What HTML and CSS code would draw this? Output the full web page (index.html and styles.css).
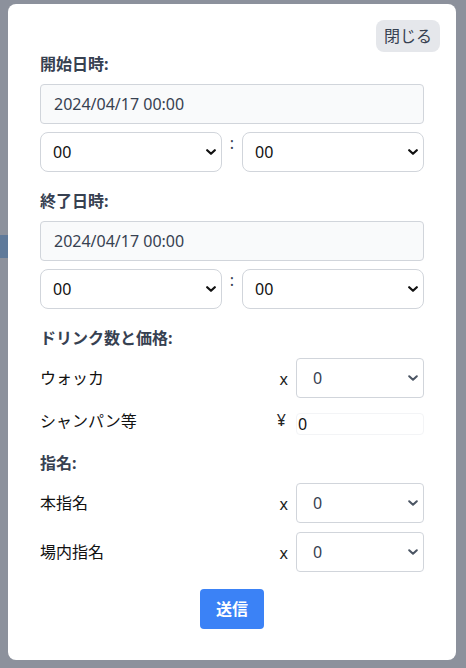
FILE: index.html
```html
<!DOCTYPE html>
<html lang="ja">
<head>
<meta charset="utf-8">
<title>入力</title>
<link rel="stylesheet" href="styles.css">
</head>
<body>
<div class="backdrop">
  <div class="strip"></div>
  <div class="modal">
    <div class="modal-head">
      <button class="close-btn" type="button">閉じる</button>
    </div>

    <div class="label">開始日時:</div>
    <input class="date-input" type="text" value="2024/04/17 00:00" readonly>
    <div class="time-row">
      <select class="time-select"><option>00</option></select>
      <span class="colon">:</span>
      <select class="time-select"><option>00</option></select>
    </div>

    <div class="label">終了日時:</div>
    <input class="date-input" type="text" value="2024/04/17 00:00" readonly>
    <div class="time-row">
      <select class="time-select"><option>00</option></select>
      <span class="colon">:</span>
      <select class="time-select"><option>00</option></select>
    </div>

    <div class="label">ドリンク数と価格:</div>
    <div class="item-row">
      <span class="item-name">ウォッカ</span>
      <span class="unit">x</span>
      <select class="count-select"><option>0</option></select>
    </div>
    <div class="item-row price-row">
      <span class="item-name">シャンパン等</span>
      <span class="unit yen">¥</span>
      <input class="price-input" type="text" value="0">
    </div>

    <div class="label">指名:</div>
    <div class="item-row">
      <span class="item-name">本指名</span>
      <span class="unit">x</span>
      <select class="count-select"><option>0</option></select>
    </div>
    <div class="item-row gap-row">
      <span class="item-name">場内指名</span>
      <span class="unit">x</span>
      <select class="count-select"><option>0</option></select>
    </div>

    <div class="actions">
      <button class="submit-btn" type="button">送信</button>
    </div>
  </div>
</div>
</body>
</html>
```

FILE: styles.css
```css
* {
  box-sizing: border-box;
}

html, body {
  margin: 0;
  padding: 0;
}

body {
  width: 466px;
  height: 668px;
  overflow: hidden;
  font-family: "Noto Sans", "Noto Sans CJK JP", sans-serif;
  font-size: 16px;
  line-height: 24px;
  color: #374151;
}

.backdrop {
  position: relative;
  width: 466px;
  height: 668px;
  background: #8c919c;
  padding: 4px 10px 0 8px;
}

.strip {
  position: absolute;
  left: 0;
  top: 235px;
  width: 8px;
  height: 23px;
  background: #5f7a9a;
}

.modal {
  position: relative;
  width: 448px;
  background: #ffffff;
  border-radius: 8px;
  padding: 16px 32px 31px 32px;
  display: flex;
  flex-direction: column;
}

.modal-head {
  display: flex;
  justify-content: flex-end;
  height: 32px;
  margin-right: -16px;
}

.close-btn {
  font-family: inherit;
  font-size: 16px;
  line-height: 24px;
  color: #374151;
  background: #e5e7eb;
  border: none;
  border-radius: 8px;
  padding: 4px 8px;
  height: 32px;
}

.label {
  font-weight: 700;
  line-height: 24px;
  color: #374151;
  margin-bottom: 8px;
}

.date-input {
  display: block;
  width: 100%;
  height: 40px;
  border: 1px solid #d1d5db;
  border-radius: 4px;
  background: #f9fafb;
  padding: 0 13px;
  font-family: inherit;
  font-size: 16px;
  color: #374151;
  margin: 0 0 8px 0;
  outline: none;
}

.time-row {
  display: flex;
  height: 40px;
  margin-bottom: 17px;
}

.time-select {
  flex: 1;
  min-width: 0;
  height: 40px;
  appearance: none;
  -webkit-appearance: none;
  border: 1px solid #d1d5db;
  border-radius: 8px;
  background-color: #ffffff;
  background-image: url("data:image/svg+xml,%3Csvg xmlns='http://www.w3.org/2000/svg' viewBox='0 0 10 6'%3E%3Cpath d='M1.2 1.2l3.8 3.6 3.8-3.6' fill='none' stroke='%23111' stroke-width='2.2' stroke-linecap='round' stroke-linejoin='round'/%3E%3C/svg%3E");
  background-repeat: no-repeat;
  background-size: 10px 6px;
  background-position: right 5px center;
  padding: 0 24px 0 12px;
  font-family: inherit;
  font-size: 16px;
  color: #111111;
}

.colon {
  align-self: flex-start;
  width: 20px;
  text-align: center;
  line-height: 22px;
  color: #374151;
}

.item-row {
  display: flex;
  align-items: center;
  height: 40px;
  margin-bottom: 8px;
}

.item-name {
  flex: 1;
  color: #111111;
}

.unit {
  margin-right: 8px;
  color: #222222;
  padding-top: 2px;
}

.count-select {
  width: 128px;
  height: 40px;
  appearance: none;
  -webkit-appearance: none;
  border: 1px solid #d1d5db;
  border-radius: 4px;
  background-color: #ffffff;
  background-image: url("data:image/svg+xml,%3Csvg xmlns='http://www.w3.org/2000/svg' viewBox='0 0 10 6'%3E%3Cpath d='M1.2 1.2l3.8 3.6 3.8-3.6' fill='none' stroke='%234b5563' stroke-width='2' stroke-linecap='round' stroke-linejoin='round'/%3E%3C/svg%3E");
  background-repeat: no-repeat;
  background-size: 10px 6px;
  background-position: right 5px center;
  padding: 0 24px 0 16px;
  font-family: inherit;
  font-size: 16px;
  color: #374151;
}

.price-row {
  align-items: flex-start;
  height: 26px;
  margin-top: 3px;
  margin-bottom: 16px;
}

.price-row .item-name {
  line-height: 24px;
}

.yen {
  margin-right: 10px;
  padding-top: 0;
  line-height: 22px;
}

.price-input {
  width: 128px;
  height: 22px;
  margin-top: 4px;
  border: 1px solid #f3f4f6;
  border-radius: 4px;
  padding: 0 0 0 1px;
  font-family: inherit;
  font-size: 16px;
  color: #111111;
  background: #ffffff;
  outline: none;
}

.gap-row {
  margin-top: 1px;
  margin-bottom: 17px;
}

.actions {
  display: flex;
  justify-content: center;
}

.submit-btn {
  font-family: inherit;
  font-size: 16px;
  font-weight: 700;
  line-height: 24px;
  color: #ffffff;
  background: #3b82f6;
  border: none;
  border-radius: 4px;
  padding: 8px 16px;
  height: 40px;
}
```
